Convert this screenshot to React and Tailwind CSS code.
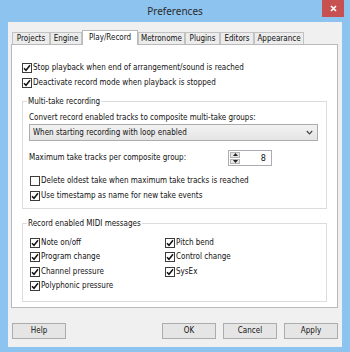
import { useState } from 'react'

const tabs = ['Projects', 'Engine', 'Play/Record', 'Metronome', 'Plugins', 'Editors', 'Appearance']
const tabWidths = {
  Projects: 'w-[38px]',
  Engine: 'w-[32px]',
  'Play/Record': 'w-[56px]',
  Metronome: 'w-[47px]',
  Plugins: 'w-[35px]',
  Editors: 'w-[34px]',
  Appearance: 'w-[50px]'
}

function CheckBox({ checked, onChange, label, className = '' }) {
  return (
    <label className={`flex items-center h-[15px] cursor-default ${className}`}>
      <span
        onClick={onChange}
        className="w-[10px] h-[10px] border border-[#3c3c3c] bg-white flex items-center justify-center mr-[1px]"
      >
        {checked && (
          <svg width="8" height="8" viewBox="0 0 8 8">
            <path d="M1 4.2 L3 6.3 L7 1.3" fill="none" stroke="#111" strokeWidth="1.5" />
          </svg>
        )}
      </span>
      <span>{label}</span>
    </label>
  )
}

function Group({ title, children, className = '' }) {
  return (
    <fieldset className={`border border-[#dcdcdc] pl-[6px] pr-[8px] ${className}`}>
      <legend className="-ml-[2px] px-[1px] leading-[15px]">{title}</legend>
      {children}
    </fieldset>
  )
}

export default function App() {
  const [active, setActive] = useState('Play/Record')
  const [checks, setChecks] = useState({
    stopPlayback: true,
    deactivate: true,
    deleteOldest: false,
    timestamp: true,
    noteOnOff: true,
    programChange: true,
    channelPressure: true,
    polyPressure: true,
    pitchBend: true,
    controlChange: true,
    sysex: true
  })
  const [maxTakes, setMaxTakes] = useState(8)

  const toggle = (key) => setChecks(prev => ({ ...prev, [key]: !prev[key] }))

  return (
    <div className="w-[350px] h-[352px] bg-[#8cc3ef] flex flex-col font-['DejaVu_Sans_Condensed','Liberation_Sans',sans-serif] text-[8px] text-[#111] overflow-hidden">
      {/* title bar */}
      <div className="h-[22px] relative flex items-center justify-center">
        <span className="font-['Noto_Sans',sans-serif] text-[10px] text-[#2b2b2b]">Preferences</span>
        <button className="absolute right-[6px] top-0 w-[22px] h-[17px] bg-[#c75050] flex items-center justify-center">
          <svg width="7" height="7" viewBox="0 0 7 7">
            <path d="M1 1 L6 6 M6 1 L1 6" stroke="white" strokeWidth="1.6" />
          </svg>
        </button>
      </div>

      <div className="ml-[8px] w-[334px] flex-1 mb-[5px] bg-[#f0f0f0] px-[3px] pt-[8px] flex flex-col">
        {/* tabs */}
        <div className="flex items-end h-[14px] ml-[1px]">
          {tabs.map(t => (
            t === active ? (
              <div
                key={t}
                className={`${tabWidths[t]} h-[15px] -mb-px relative z-10 bg-white border border-b-0 border-[#b9b9b9] flex items-center justify-center`}
              >
                {t}
              </div>
            ) : (
              <div
                key={t}
                onClick={() => setActive(t)}
                className={`${tabWidths[t]} h-[12px] bg-[#ececec] border border-b-0 border-[#c2c2c2] flex items-center justify-center`}
              >
                {t}
              </div>
            )
          ))}
        </div>

        {/* page */}
        <div className="w-[327px] h-[264px] bg-white border border-[#b9b9b9] px-[10px] pt-[15px]">
          <CheckBox checked={checks.stopPlayback} onChange={() => toggle('stopPlayback')} label="Stop playback when end of arrangement/sound is reached" />
          <CheckBox checked={checks.deactivate} onChange={() => toggle('deactivate')} label="Deactivate record mode when playback is stopped" />

          <Group title="Multi-take recording" className="mt-[4px] pb-[5px]">
            <div className="h-[13px] mt-[2px] flex items-center">Convert record enabled tracks to composite multi-take groups:</div>
            <div className="h-[17px] border border-[#acacac] bg-gradient-to-b from-[#f2f2f2] to-[#e5e5e5] flex items-center pl-[3px] pr-[4px]">
              <span className="flex-1">When starting recording with loop enabled</span>
              <svg width="7" height="5" viewBox="0 0 7 5">
                <path d="M0.8 1 L3.5 3.8 L6.2 1" fill="none" stroke="#444" strokeWidth="1.2" />
              </svg>
            </div>
            <div className="flex items-center mt-[9px] h-[16px]">
              <span className="w-[199px]">Maximum take tracks per composite group:</span>
              <div className="w-[44px] h-[16px] border border-[#abadb3] bg-white flex">
                <div className="w-[12px] flex flex-col">
                  <button onClick={() => setMaxTakes(v => v + 1)} className="flex-1 m-[1px] mb-0 bg-[#e6e6e6] border border-[#b5b5b5] flex items-center justify-center">
                    <svg width="5" height="3" viewBox="0 0 5 3"><path d="M0 3 L2.5 0 L5 3 Z" fill="#222" /></svg>
                  </button>
                  <button onClick={() => setMaxTakes(v => Math.max(1, v - 1))} className="flex-1 m-[1px] bg-[#e6e6e6] border border-[#b5b5b5] flex items-center justify-center">
                    <svg width="5" height="3" viewBox="0 0 5 3"><path d="M0 0 L2.5 3 L5 0 Z" fill="#222" /></svg>
                  </button>
                </div>
                <span className="flex-1 text-right pr-[5px] text-[9px] leading-[14px]">{maxTakes}</span>
              </div>
            </div>
            <div className="mt-[7px] ml-[1px]">
              <CheckBox checked={checks.deleteOldest} onChange={() => toggle('deleteOldest')} label="Delete oldest take when maximum take tracks is reached" />
              <CheckBox checked={checks.timestamp} onChange={() => toggle('timestamp')} label="Use timestamp as name for new take events" />
            </div>
          </Group>

          <Group title="Record enabled MIDI messages" className="mt-[7px] pb-[8px]">
            <div className="grid grid-cols-[135px_1fr] auto-rows-[14.5px] pt-[4px] ml-[1px]">
              <CheckBox checked={checks.noteOnOff} onChange={() => toggle('noteOnOff')} label="Note on/off" className="h-[14.5px]" />
              <CheckBox checked={checks.pitchBend} onChange={() => toggle('pitchBend')} label="Pitch bend" className="h-[14.5px]" />
              <CheckBox checked={checks.programChange} onChange={() => toggle('programChange')} label="Program change" className="h-[14.5px]" />
              <CheckBox checked={checks.controlChange} onChange={() => toggle('controlChange')} label="Control change" className="h-[14.5px]" />
              <CheckBox checked={checks.channelPressure} onChange={() => toggle('channelPressure')} label="Channel pressure" className="h-[14.5px]" />
              <CheckBox checked={checks.sysex} onChange={() => toggle('sysex')} label="SysEx" className="h-[14.5px]" />
              <CheckBox checked={checks.polyPressure} onChange={() => toggle('polyPressure')} label="Polyphonic pressure" className="h-[14.5px]" />
            </div>
          </Group>
        </div>

        {/* buttons */}
        <div className="flex mt-[15px] ml-[1px] w-[326px]">
          <button className="w-[54px] h-[16px] bg-[#e5e5e5] border border-[#acacac]">Help</button>
          <div className="flex-1" />
          <div className="flex gap-[7px]">
            <button className="w-[54px] h-[16px] bg-[#e5e5e5] border border-[#acacac]">OK</button>
            <button className="w-[54px] h-[16px] bg-[#e5e5e5] border border-[#acacac]">Cancel</button>
            <button className="w-[54px] h-[16px] bg-[#e5e5e5] border border-[#acacac]">Apply</button>
          </div>
        </div>
      </div>
    </div>
  )
}
